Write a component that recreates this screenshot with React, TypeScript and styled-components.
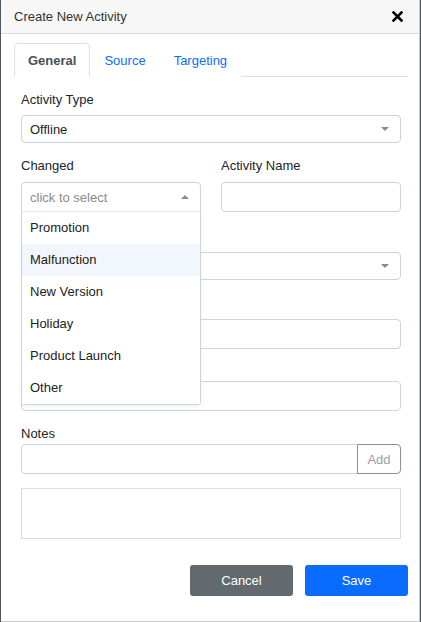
import React, { useState } from 'react';
import styled, { createGlobalStyle } from 'styled-components';

const GlobalStyle = createGlobalStyle`
  html, body {
    margin: 0;
    padding: 0;
    background: #4d585d;
  }
  body {
    font-family: "Liberation Sans", Arial, Helvetica, sans-serif;
    font-size: 13px;
    color: #212529;
  }
  * {
    box-sizing: border-box;
  }
`;

const Modal = styled.div`
  width: 419px;
  height: 622px;
  margin-left: 1px;
  background: #fff;
  border-right: 1px solid #c9c9c9;
  border-bottom: 1px solid #c9c9c9;
  display: flex;
  flex-direction: column;
`;

const Header = styled.div`
  height: 34px;
  padding: 0 16px 0 13px;
  background: #f7f7f7;
  border-bottom: 1px solid #dcdcdc;
  display: flex;
  align-items: center;
  justify-content: space-between;
`;

const Title = styled.h1`
  margin: 0;
  font-size: 13px;
  font-weight: 400;
  color: #333;
`;

const CloseButton = styled.button`
  border: 0;
  background: none;
  padding: 0;
  width: 12px;
  height: 12px;
  display: flex;
  align-items: center;
  justify-content: center;
  cursor: pointer;
`;

const Body = styled.div`
  padding: 9px 11px 0 13px;
`;

const TabBar = styled.div`
  display: flex;
  border-bottom: 1px solid #dee2e6;
`;

const Tab = styled.button<{ $active?: boolean }>`
  height: 34px;
  padding: 0 13px;
  margin-bottom: -1px;
  font-family: inherit;
  font-size: 13px;
  font-weight: ${(p) => (p.$active ? 700 : 400)};
  color: ${(p) => (p.$active ? '#495057' : '#0d6efd')};
  background: #fff;
  border: 1px solid ${(p) => (p.$active ? '#dee2e6' : 'transparent')};
  border-bottom-color: ${(p) => (p.$active ? '#fff' : 'transparent')};
  border-radius: 4px 4px 0 0;
  cursor: pointer;
`;

const Form = styled.div`
  padding: 14px 7px 0;
`;

const Group = styled.div<{ $gap?: number }>`
  margin-bottom: ${(p) => p.$gap ?? 14}px;
  position: relative;
`;

const Row = styled.div<{ $gap?: number }>`
  display: grid;
  grid-template-columns: 1fr 1fr;
  column-gap: 20px;
  margin-bottom: ${(p) => p.$gap ?? 14}px;
  position: relative;
  z-index: 2;
`;

const Label = styled.label<{ $space?: number }>`
  display: block;
  min-height: 18px;
  font-size: 13px;
  line-height: 18px;
  color: #212529;
  margin-bottom: ${(p) => p.$space ?? 7}px;
`;

const SelectBox = styled.div<{ $open?: boolean; $h?: number }>`
  height: ${(p) => p.$h ?? 28}px;
  border: 1px solid #ced4da;
  border-radius: ${(p) => (p.$open ? '4px 4px 0 0' : '4px')};
  padding: 0 8px;
  display: flex;
  align-items: center;
  justify-content: space-between;
  background: #fff;
  font-size: 13px;
  color: #212529;
  position: relative;
`;

const Placeholder = styled.span`
  color: #8a8a8a;
`;

const Caret = styled.span<{ $up?: boolean }>`
  width: 0;
  height: 0;
  margin-right: 3px;
  border-left: 4px solid transparent;
  border-right: 4px solid transparent;
  ${(p) =>
    p.$up
      ? 'border-bottom: 4px solid #8a8a8a;'
      : 'border-top: 4px solid #8a8a8a;'}
`;

const TextInput = styled.input`
  width: 100%;
  height: 30px;
  border: 1px solid #ced4da;
  border-radius: 4px;
  padding: 0 8px;
  font-family: inherit;
  font-size: 13px;
  display: block;
  outline: none;
`;

const Cell = styled.div`
  position: relative;
`;

const Menu = styled.ul`
  position: absolute;
  left: 0;
  right: 0;
  top: calc(100% - 1px);
  margin: 0;
  padding: 0;
  list-style: none;
  background: #fff;
  border: 1px solid #ced4da;
  border-top: 1px solid #e6e6e6;
  border-radius: 0 0 4px 4px;
  box-shadow: 0 2px 4px rgba(0, 0, 0, 0.06);
  z-index: 5;
`;

const MenuItem = styled.li<{ $hover?: boolean }>`
  height: 32px;
  line-height: 32px;
  padding-left: 8px;
  font-size: 13px;
  color: #222;
  background: ${(p) => (p.$hover ? '#f2f7fd' : '#fff')};
  cursor: pointer;
`;

const InputGroup = styled.div`
  display: flex;
`;

const GroupInput = styled(TextInput)`
  flex: 1;
  border-radius: 4px 0 0 4px;
`;

const AddButton = styled.button`
  width: 44px;
  height: 30px;
  margin-left: -1px;
  border: 1px solid #8a9096;
  border-radius: 0 4px 4px 0;
  background: #fff;
  color: #9aa0a6;
  font-family: inherit;
  font-size: 13px;
  padding: 0;
`;

const NotesArea = styled.div`
  height: 51px;
  border: 1px solid #dcdcdc;
`;

const Footer = styled.div`
  display: flex;
  justify-content: flex-end;
  gap: 12px;
  margin-top: 26px;
`;

const ActionButton = styled.button<{ $primary?: boolean }>`
  width: 103px;
  height: 31px;
  border: 0;
  border-radius: 3px;
  background: ${(p) => (p.$primary ? '#0a6cff' : '#626a70')};
  color: #fff;
  font-family: inherit;
  font-size: 13px;
  cursor: pointer;
`;

const options = ['Promotion', 'Malfunction', 'New Version', 'Holiday', 'Product Launch', 'Other'];

function App() {
  const [tab, setTab] = useState('General');
  const [hovered, setHovered] = useState('Malfunction');

  return (
    <>
      <GlobalStyle />
      <Modal>
        <Header>
          <Title>Create New Activity</Title>
          <CloseButton aria-label="close">
            <svg width="11" height="11" viewBox="0 0 11 11">
              <path d="M1.5 1.5 L9.5 9.5 M9.5 1.5 L1.5 9.5" stroke="#000" strokeWidth="2.6" strokeLinecap="square" />
            </svg>
          </CloseButton>
        </Header>
        <Body>
          <TabBar>
            {['General', 'Source', 'Targeting'].map((t) => (
              <Tab key={t} $active={tab === t} onClick={() => setTab(t)}>
                {t}
              </Tab>
            ))}
          </TabBar>
          <Form>
            <Group>
              <Label $space={6}>Activity Type</Label>
              <SelectBox>
                <span>Offline</span>
                <Caret />
              </SelectBox>
            </Group>
            <Row $gap={15}>
              <Cell>
                <Label>Changed</Label>
                <Cell>
                  <SelectBox $open $h={30}>
                    <Placeholder>click to select</Placeholder>
                    <Caret $up />
                  </SelectBox>
                  <Menu>
                    {options.map((o) => (
                      <MenuItem key={o} $hover={hovered === o} onMouseEnter={() => setHovered(o)}>
                        {o}
                      </MenuItem>
                    ))}
                  </Menu>
                </Cell>
              </Cell>
              <Cell>
                <Label>Activity Name</Label>
                <TextInput />
              </Cell>
            </Row>
            {/* labels of these fields sit under the open menu */}
            <Group>
              <Label aria-label="Category" />
              <SelectBox>
                <span />
                <Caret />
              </SelectBox>
            </Group>
            <Group $gap={7}>
              <Label aria-label="Start Date" />
              <TextInput />
            </Group>
            <Group>
              <Label aria-label="End Date" />
              <TextInput />
            </Group>
            <Group>
              <Label $space={1}>Notes</Label>
              <InputGroup>
                <GroupInput />
                <AddButton>Add</AddButton>
              </InputGroup>
            </Group>
            <NotesArea />
          </Form>
          <Footer>
            <ActionButton>Cancel</ActionButton>
            <ActionButton $primary>Save</ActionButton>
          </Footer>
        </Body>
      </Modal>
    </>
  );
}

export default App;
